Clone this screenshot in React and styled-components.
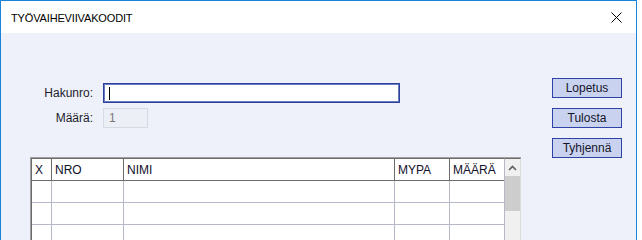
import React from "react";
import styled, { createGlobalStyle } from "styled-components";

const GlobalStyle = createGlobalStyle`
  html, body {
    margin: 0;
    padding: 0;
    background: #fff;
    overflow: hidden;
  }
  body {
    font-family: "Liberation Sans", Arial, sans-serif;
    font-size: 12px;
  }
`;

const Screen = styled.div`
  height: 240px;
  overflow: hidden;
  padding-right: 5px;
`;

const Window = styled.div`
  border: 1px solid #1883d7;
  border-bottom: 0;
  height: 300px;
  background: #eef1f9;
`;

const TitleBar = styled.div`
  height: 32px;
  background: #fff;
  display: flex;
  align-items: center;
  justify-content: space-between;
  padding: 0 8px 0 10px;
`;

const Title = styled.span`
  font-size: 11px;
  letter-spacing: -0.15px;
  color: #000;
  margin-top: 1px;
`;

const Close = styled.button`
  appearance: none;
  border: 0;
  background: transparent;
  width: 24px;
  height: 24px;
  display: flex;
  align-items: center;
  justify-content: center;
  padding: 0;
`;

const Body = styled.div`
  display: flex;
  padding: 45px 14px 0 29px;
`;

const Main = styled.div`
  flex: 1;
  padding-top: 5px;
`;

const Form = styled.div`
  display: grid;
  grid-template-columns: 63px auto;
  column-gap: 10px;
  row-gap: 5px;
  align-items: center;
  margin-bottom: 29px;
`;

const Label = styled.label`
  text-align: right;
  color: #1c1c2c;
  font-size: 12px;
`;

const Field = styled.div`
  box-sizing: border-box;
  height: 20px;
  width: ${(p) => p.$width}px;
  display: flex;
  align-items: center;
  padding-left: 5px;
  background: ${(p) => (p.$disabled ? "#eceff5" : "#fff")};
  border: 1px solid ${(p) => (p.$disabled ? "#d6dae3" : "#2c3f9a")};
  box-shadow: ${(p) => (p.$disabled ? "none" : "inset 0 0 0 1px #6b7bc0")};
  color: #777;
`;

const Caret = styled.span`
  width: 1px;
  height: 13px;
  background: #000;
`;

const Table = styled.div`
  width: 489px;
  border: 1px solid #a0a0a0;
  border-bottom: 0;
  display: flex;
  background: #fff;
`;

const Grid = styled.div`
  flex: 1;
  border-top: 1px solid #6b6b6b;
  border-left: 1px solid #6b6b6b;
`;

const Row = styled.div`
  display: grid;
  grid-template-columns: 20px 72px 271px 55px 54px;
  height: 22px;
  box-sizing: border-box;
  border-bottom: 1px solid ${(p) => (p.$head ? "#6b6b6b" : "#b5b8c9")};
`;

const Cell = styled.div`
  border-right: 1px solid ${(p) => (p.$head ? "#6b6b6b" : "#b5b8c9")};
  padding-left: 3px;
  display: flex;
  align-items: center;
  color: #10102a;
  font-size: 12px;
  &:last-child {
    border-right: 0;
  }
`;

const Scrollbar = styled.div`
  width: 16px;
  border-top: 1px solid #6b6b6b;
  border-left: 1px solid #b5b8c9;
  border-right: 1px solid #dcdcdc;
  background: #f0f0f0;
  display: flex;
  flex-direction: column;
  align-items: center;
`;

const Arrow = styled.div`
  height: 17px;
  display: flex;
  align-items: center;
  justify-content: center;
`;

const Thumb = styled.div`
  width: 15px;
  height: 35px;
  background: #cdcdcd;
`;

const Side = styled.div`
  width: 70px;
  display: flex;
  flex-direction: column;
  gap: 10px;
`;

const Button = styled.button`
  appearance: none;
  box-sizing: border-box;
  height: 20px;
  width: 70px;
  padding: 0;
  background: #c9d3f0;
  border: 1px solid #2f42a5;
  font-family: "Liberation Sans", Arial, sans-serif;
  font-size: 12px;
  color: #15152a;
`;

const columns = ["X", "NRO", "NIMI", "MYPA", "MÄÄRÄ"];

export default function App() {
  return (
    <Screen>
      <GlobalStyle />
      <Window>
        <TitleBar>
          <Title>TYÖVAIHEVIIVAKOODIT</Title>
          <Close aria-label="Sulje">
            <svg width="11" height="11" viewBox="0 0 11 11">
              <path d="M0.5 0.5L10.5 10.5M10.5 0.5L0.5 10.5" stroke="#000" strokeWidth="1" />
            </svg>
          </Close>
        </TitleBar>
        <Body>
          <Main>
            <Form>
              <Label>Hakunro:</Label>
              <Field $width={297}>
                <Caret />
              </Field>
              <Label>Määrä:</Label>
              <Field $width={45} $disabled>
                1
              </Field>
            </Form>
            <Table>
              <Grid>
                <Row $head>
                  {columns.map((c) => (
                    <Cell $head key={c}>
                      {c}
                    </Cell>
                  ))}
                </Row>
                {[0, 1, 2, 3].map((r) => (
                  <Row key={r}>
                    {columns.map((c) => (
                      <Cell key={c} />
                    ))}
                  </Row>
                ))}
              </Grid>
              <Scrollbar>
                <Arrow>
                  <svg width="9" height="6" viewBox="0 0 9 6">
                    <path d="M1 5L4.5 1.5L8 5" stroke="#606060" strokeWidth="1.6" fill="none" />
                  </svg>
                </Arrow>
                <Thumb />
              </Scrollbar>
            </Table>
          </Main>
          <Side>
            <Button>Lopetus</Button>
            <Button>Tulosta</Button>
            <Button>Tyhjennä</Button>
          </Side>
        </Body>
      </Window>
    </Screen>
  );
}
